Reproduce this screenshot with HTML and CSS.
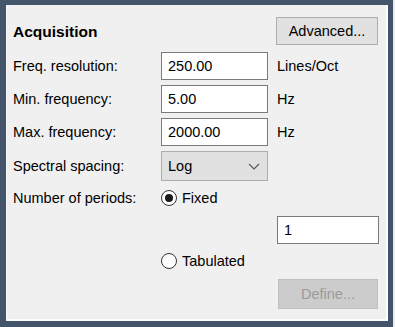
FILE: index.html
```html
<!DOCTYPE html>
<html lang="en">
<head>
    <meta charset="UTF-8" />
    <title>Acquisition</title>
    <link rel="stylesheet" href="styles.css">
</head>
<body>
    <div class="frame">
        <div class="panel">
            <div class="row header">
                <div class="title">Acquisition</div>
                <div class="spacer"></div>
                <button class="btn">Advanced...</button>
            </div>

            <div class="row r-first">
                <label class="label">Freq. resolution:</label>
                <input class="field" type="text" value="250.00">
                <span class="unit">Lines/Oct</span>
            </div>
            <div class="row">
                <label class="label">Min. frequency:</label>
                <input class="field" type="text" value="5.00">
                <span class="unit">Hz</span>
            </div>
            <div class="row">
                <label class="label">Max. frequency:</label>
                <input class="field" type="text" value="2000.00">
                <span class="unit">Hz</span>
            </div>
            <div class="row r-select">
                <label class="label">Spectral spacing:</label>
                <div class="select">
                    <span>Log</span>
                    <svg width="12" height="7" viewBox="0 0 12 7">
                        <path d="M1 1 L6 6 L11 1" fill="none" stroke="#555" stroke-width="1.1"/>
                    </svg>
                </div>
            </div>
            <div class="row r-radio">
                <label class="label">Number of periods:</label>
                <div class="option">
                    <span class="radio checked"></span>
                    <span>Fixed</span>
                </div>
            </div>
            <div class="row r-count">
                <div></div>
                <div></div>
                <input class="field" type="text" value="1">
            </div>
            <div class="row r-radio">
                <div></div>
                <div class="option">
                    <span class="radio"></span>
                    <span>Tabulated</span>
                </div>
            </div>
            <div class="row r-define">
                <div></div>
                <div></div>
                <button class="btn disabled" disabled>Define...</button>
            </div>
        </div>
    </div>
</body>
</html>
```

FILE: styles.css
```css
body {
    margin: 0;
    padding: 0;
    background-color: #ececec;
    font-family: 'Liberation Sans', Arial, sans-serif;
    font-size: 14.5px;
    color: #000;
}

.frame {
    width: 393px;
    height: 327px;
    box-sizing: border-box;
    border-style: solid;
    border-color: #44546a;
    border-width: 5px 5px 6px 6px;
    background-color: #f0f0f0;
}

.panel {
    height: 100%;
    box-sizing: border-box;
    border-left: 1px solid #f8f8f8;
    border-right: 2px solid #fcfcfc;
    border-bottom: 2px solid #fcfcfc;
    padding: 12px 0 0 6px;
}

.row {
    display: grid;
    grid-template-columns: 140px 107px 102px;
    column-gap: 8px;
    align-items: center;
    height: 28px;
    margin-top: 5px;
}

.header {
    margin-top: 0;
}

.r-first {
    margin-top: 7px;
}

.r-select {
    height: 30px;
}

.r-radio {
    height: 18px;
    margin-top: 8px;
}

.r-count {
    margin-top: 9px;
}

.r-define {
    height: 30px;
    margin-top: 9px;
}

.title {
    font-weight: bold;
    font-size: 15.5px;
    padding-top: 1px;
}

.btn {
    height: 100%;
    width: 102px;
    font-family: inherit;
    font-size: 14.5px;
    color: #000;
    background-color: #e1e1e1;
    border: 1px solid #adadad;
    padding: 0;
}

.btn.disabled {
    margin-left: 2px;
    width: 100px;
    color: #9b9b9b;
    background-color: #cccccc;
    border-color: #bfbfbf;
}

.field {
    height: 100%;
    box-sizing: border-box;
    margin: 0;
    border: 1px solid #7a7a7a;
    background-color: #fff;
    padding: 0 0 0 6px;
    font-family: inherit;
    font-size: 14.5px;
    color: #000;
}

.r-count .field {
    width: 102px;
    margin-left: 1px;
}

.unit {
    padding-left: 1px;
}

.select {
    height: 100%;
    box-sizing: border-box;
    border: 1px solid #adadad;
    background-color: #e1e1e1;
    display: flex;
    align-items: center;
    justify-content: space-between;
    padding: 0 7px 0 6px;
}

.option {
    display: flex;
    align-items: center;
    gap: 5px;
}

.radio {
    width: 16px;
    height: 16px;
    box-sizing: border-box;
    border: 1.5px solid #333;
    border-radius: 50%;
    background-color: #fff;
    display: flex;
    align-items: center;
    justify-content: center;
}

.radio.checked::after {
    content: "";
    width: 8px;
    height: 8px;
    border-radius: 50%;
    background-color: #1a1a1a;
}
```
